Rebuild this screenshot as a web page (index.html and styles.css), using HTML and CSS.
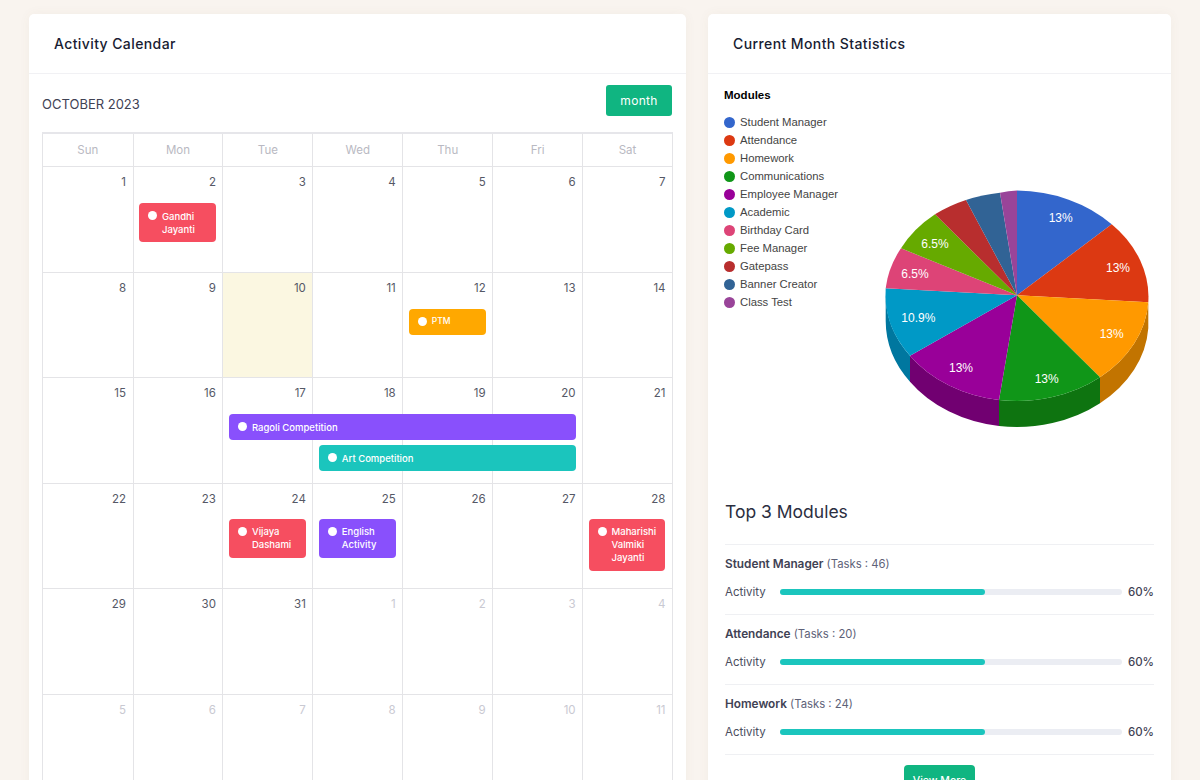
FILE: index.html
```html
<!DOCTYPE html>
<html lang="en">
<head>
<meta charset="utf-8">
<title>Activity Calendar</title>
<link rel="stylesheet" href="styles.css">
</head>
<body>
<main class="page">
  <section class="card card-left">
    <header class="card-head"><h2>Activity Calendar</h2></header>
    <div class="cal-body">
      <div class="toolbar">
        <h3 class="month-title">OCTOBER 2023</h3>
        <button class="btn-month">month</button>
      </div>
      <div class="calendar">
        <div class="dow">
          <div>Sun</div><div>Mon</div><div>Tue</div><div>Wed</div><div>Thu</div><div>Fri</div><div>Sat</div>
        </div>
        <div class="week">
          <div class="day c1">1</div><div class="day c2">2</div><div class="day c3">3</div><div class="day c4">4</div><div class="day c5">5</div><div class="day c6">6</div><div class="day c7">7</div>
          <div class="event red c2 r2"><i></i><span>Gandhi Jayanti</span></div>
        </div>
        <div class="week">
          <div class="day c1">8</div><div class="day c2">9</div><div class="day c3 today">10</div><div class="day c4">11</div><div class="day c5">12</div><div class="day c6">13</div><div class="day c7">14</div>
          <div class="event orange c5 r2"><i></i><span class="small">PTM</span></div>
        </div>
        <div class="week">
          <div class="day c1">15</div><div class="day c2">16</div><div class="day c3">17</div><div class="day c4">18</div><div class="day c5">19</div><div class="day c6">20</div><div class="day c7">21</div>
          <div class="event violet c3 span4 r2"><i></i><span>Ragoli Competition</span></div>
          <div class="event teal c4 span3 r3"><i></i><span>Art Competition</span></div>
        </div>
        <div class="week">
          <div class="day c1">22</div><div class="day c2">23</div><div class="day c3">24</div><div class="day c4">25</div><div class="day c5">26</div><div class="day c6">27</div><div class="day c7">28</div>
          <div class="event red c3 r2 up"><i></i><span>Vijaya Dashami</span></div>
          <div class="event violet c4 r2 up"><i></i><span>English Activity</span></div>
          <div class="event red c7 r2 up"><i></i><span>Maharishi Valmiki Jayanti</span></div>
        </div>
        <div class="week">
          <div class="day c1">29</div><div class="day c2">30</div><div class="day c3">31</div><div class="day c4 off">1</div><div class="day c5 off">2</div><div class="day c6 off">3</div><div class="day c7 off">4</div>
        </div>
        <div class="week">
          <div class="day c1 off">5</div><div class="day c2 off">6</div><div class="day c3 off">7</div><div class="day c4 off">8</div><div class="day c5 off">9</div><div class="day c6 off">10</div><div class="day c7 off">11</div>
        </div>
      </div>
    </div>
  </section>

  <section class="card card-right">
    <header class="card-head"><h2>Current Month Statistics</h2></header>
    <div class="stats-body">
      <div class="chart">
        <div class="legend">
          <h4>Modules</h4>
          <ul>
            <li><i class="k1"></i>Student Manager</li>
            <li><i class="k2"></i>Attendance</li>
            <li><i class="k3"></i>Homework</li>
            <li><i class="k4"></i>Communications</li>
            <li><i class="k5"></i>Employee Manager</li>
            <li><i class="k6"></i>Academic</li>
            <li><i class="k7"></i>Birthday Card</li>
            <li><i class="k8"></i>Fee Manager</li>
            <li><i class="k9"></i>Gatepass</li>
            <li><i class="k10"></i>Banner Creator</li>
            <li><i class="k11"></i>Class Test</li>
          </ul>
        </div>
        <svg class="pie" viewBox="874 185 290 245" width="290" height="245" role="img" aria-label="Pie chart of modules">
          <g>
            <path fill="#c27400" d="M1148.3 302.3A131.3 104.7 0 0 1 1100 377.3V403.3A131.3 104.7 0 0 0 1148.3 328.3Z"/>
            <path fill="#0e7410" d="M1100 377.3A131.3 104.7 0 0 1 999 400V426A131.3 104.7 0 0 0 1100 403.3Z"/>
            <path fill="#710071" d="M999 400A131.3 104.7 0 0 1 910 355.7V381.7A131.3 104.7 0 0 0 999 426Z"/>
            <path fill="#00779f" d="M910 355.7A131.3 104.7 0 0 1 885.7 295V321A131.3 104.7 0 0 0 910 381.7Z"/>
          </g>
          <g>
            <path fill="#3366cc" d="M1017 295.3L1017 190.6A131.3 104.7 0 0 1 1111.7 224.3Z"/>
            <path fill="#dc3912" d="M1017 295.3L1111.7 224.3A131.3 104.7 0 0 1 1148.3 302.3Z"/>
            <path fill="#ff9900" d="M1017 295.3L1148.3 302.3A131.3 104.7 0 0 1 1100 377.3Z"/>
            <path fill="#109618" d="M1017 295.3L1100 377.3A131.3 104.7 0 0 1 999 400Z"/>
            <path fill="#990099" d="M1017 295.3L999 400A131.3 104.7 0 0 1 910 355.7Z"/>
            <path fill="#0099c6" d="M1017 295.3L910 355.7A131.3 104.7 0 0 1 885.7 288.3Z"/>
            <path fill="#dd4477" d="M1017 295.3L885.7 288.3A131.3 104.7 0 0 1 901 248.3Z"/>
            <path fill="#66aa00" d="M1017 295.3L901 248.3A131.3 104.7 0 0 1 935 214.3Z"/>
            <path fill="#b82e2e" d="M1017 295.3L935 214.3A131.3 104.7 0 0 1 966 200Z"/>
            <path fill="#316395" d="M1017 295.3L966 200A131.3 104.7 0 0 1 1000 192.7Z"/>
            <path fill="#994499" d="M1017 295.3L1000 192.7A131.3 104.7 0 0 1 1017 190.6Z"/>
          </g>
          <g class="pie-labels">
            <text x="1060.7" y="222">13%</text>
            <text x="1118" y="272">13%</text>
            <text x="1111.7" y="338">13%</text>
            <text x="1046.7" y="383">13%</text>
            <text x="961" y="372">13%</text>
            <text x="918.3" y="322">10.9%</text>
            <text x="915" y="278">6.5%</text>
            <text x="935" y="248">6.5%</text>
          </g>
        </svg>
      </div>

      <h3 class="top-title">Top 3 Modules</h3>
      <div class="module">
        <p class="module-name"><b>Student Manager</b> (Tasks : 46)</p>
        <div class="module-row"><span class="label">Activity</span><div class="track"><div class="fill"></div></div><span class="pct">60%</span></div>
      </div>
      <div class="module">
        <p class="module-name"><b>Attendance</b> (Tasks : 20)</p>
        <div class="module-row"><span class="label">Activity</span><div class="track"><div class="fill"></div></div><span class="pct">60%</span></div>
      </div>
      <div class="module last">
        <p class="module-name"><b>Homework</b> (Tasks : 24)</p>
        <div class="module-row"><span class="label">Activity</span><div class="track"><div class="fill"></div></div><span class="pct">60%</span></div>
      </div>
      <div class="more"><button class="btn-more">View More</button></div>
    </div>
  </section>
</main>
</body>
</html>
```
FILE: styles.css
```css
* { box-sizing: border-box; }
html, body { margin: 0; height: 780px; overflow: hidden; }
body {
  background: #f9f4ef;
  font-family: Inter, "Open Sans", sans-serif;
  color: #3f4254;
}
.page {
  display: flex;
  gap: 22px;
  padding: 14px 29px 0;
  align-items: flex-start;
}
.card {
  background: #fff;
  border-radius: 5px;
  box-shadow: 0 0 12px rgba(120, 90, 60, .05);
  height: 900px;
}
.card-left { width: 657px; }
.card-right { width: 463px; }
.card-head {
  height: 60px;
  padding: 0 25px;
  display: flex;
  align-items: center;
  border-bottom: 1px solid #f1f1f4;
}
.card-head h2 {
  margin: 0;
  font-size: 14px;
  font-weight: 500;
  color: #181c32;
  letter-spacing: .4px;
}
.cal-body { padding: 11px 13px 0; }
.toolbar {
  display: flex;
  justify-content: space-between;
  align-items: flex-start;
  margin: 0 1px 16.5px 0;
}
.month-title {
  margin: 10.5px 0 0;
  font-size: 13px;
  line-height: 17px;
  font-weight: 400;
  color: #3f4254;
}
.btn-month {
  width: 66px;
  height: 30.5px;
  border: 0;
  border-radius: 3px;
  background: #10b581;
  color: #fff;
  font: 400 12px Inter, sans-serif;
  letter-spacing: .3px;
}
.calendar {
  border-top: 2px solid #e6e6ea;
  border-right: 1px solid #e4e4e7;
}
.dow {
  display: grid;
  grid-template-columns: 90.5px repeat(6, 1fr);
  height: 33px;
  border-bottom: 1px solid #e4e4e7;
}
.dow div {
  display: flex;
  align-items: center;
  justify-content: center;
  border-left: 1px solid #e4e4e7;
  font-size: 11.5px;
  color: #b9b9c2;
}
.week {
  display: grid;
  grid-template-columns: 90.5px repeat(6, 1fr);
  grid-template-rows: 36px auto auto 1fr;
  height: 105.5px;
}
.day {
  grid-row: 1 / -1;
  border-left: 1px solid #e4e4e7;
  border-bottom: 1px solid #e4e4e7;
  padding: 8px 6.5px 0 0;
  text-align: right;
  font-size: 11.5px;
  line-height: 15px;
  color: #555866;
}
.day.today { background: #fbf7e1; }
.day.off { color: #c9c9d2; }
.c1 { grid-column: 1; }
.c2 { grid-column: 2; }
.c3 { grid-column: 3; }
.c4 { grid-column: 4; }
.c5 { grid-column: 5; }
.c6 { grid-column: 6; }
.c7 { grid-column: 7; }
.c3.span4 { grid-column: 3 / span 4; }
.c4.span3 { grid-column: 4 / span 3; }
.event {
  display: flex;
  align-items: flex-start;
  align-self: start;
  margin: 0 6.5px;
  padding: 6.5px 6px 6.5px 9px;
  border-radius: 4px;
  color: #fff;
  font-size: 9.5px;
  font-weight: 500;
  line-height: 13px;
  z-index: 1;
}
.event i {
  flex: none;
  width: 9px;
  height: 9px;
  margin: 1.5px 5px 0 0;
  border-radius: 50%;
  background: #fff;
}
.event .small { font-size: 8.5px; }
.r2 { grid-row: 2; }
.r3 { grid-row: 3; margin-top: 5px; }
.up { margin-top: -1px; }
.red { background: #f64e60; }
.orange { background: #ffa800; }
.violet { background: #8950fc; }
.teal { background: #1bc5bd; }

.stats-body { padding: 14px 17px 0; }
.chart {
  display: flex;
  align-items: flex-start;
  height: 342px;
}
.legend { width: 149px; flex: none; margin-left: -1px; }
.legend h4 {
  margin: 0 0 11px;
  font: 700 11.5px/14px "Liberation Sans", Arial, sans-serif;
  color: #000;
}
.legend ul { margin: 0; padding: 0; list-style: none; }
.legend li {
  display: flex;
  align-items: center;
  height: 18px;
  font: 11.3px "Liberation Sans", Arial, sans-serif;
  color: #444;
}
.legend li i {
  width: 11px;
  height: 11px;
  margin-right: 5px;
  border-radius: 50%;
}
.k1 { background: #3366cc; }
.k2 { background: #dc3912; }
.k3 { background: #ff9900; }
.k4 { background: #109618; }
.k5 { background: #990099; }
.k6 { background: #0099c6; }
.k7 { background: #dd4477; }
.k8 { background: #66aa00; }
.k9 { background: #b82e2e; }
.k10 { background: #316395; }
.k11 { background: #994499; }
.pie { flex: none; margin-top: 97px; margin-left: 1px; display: block; }
.pie-labels text {
  fill: #fff;
  font: 12px "Liberation Sans", Arial, sans-serif;
  text-anchor: middle;
}
.top-title {
  margin: 67.5px 0 19.5px;
  font-size: 17.5px;
  line-height: 27px;
  font-weight: 400;
  color: #2b2e3f;
}
.module {
  height: 70px;
  padding-top: 10px;
  border-top: 1px solid #eff0f3;
}
.module.last { height: 71px; border-bottom: 1px solid #eff0f3; }
.module-name {
  margin: 0 0 10px;
  font-size: 11.3px;
  line-height: 18px;
  color: #5e6278;
}
.module-name b { font-size: 11.8px; font-weight: 600; color: #3f4254; }
.module-row {
  display: flex;
  align-items: center;
  height: 18px;
  font-size: 11.5px;
}
.label { width: 55px; flex: none; padding-bottom: 1px; color: #4a4d5e; }
.track {
  flex: 1;
  height: 5.5px;
  border-radius: 3px;
  background: #ebedf3;
}
.fill {
  width: 60%;
  height: 100%;
  border-radius: 3px;
  background: #1bc5bd;
}
.pct {
  width: 32px;
  flex: none;
  padding-bottom: 1px;
  text-align: right;
  font-size: 11.5px;
  font-weight: 500;
  color: #3f4254;
}
.more { display: flex; justify-content: center; margin-top: 10px; }
.btn-more {
  width: 71px;
  height: 30px;
  border: 0;
  border-radius: 4px;
  background: #10b581;
  color: #fff;
  font: 500 10.5px Inter, sans-serif;
}
```
